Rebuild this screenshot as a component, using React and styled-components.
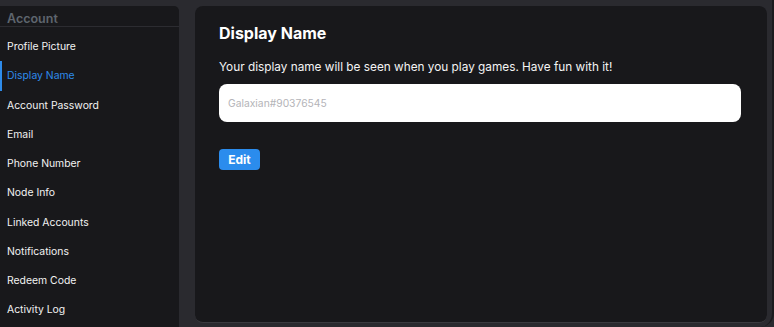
import styled, {createGlobalStyle} from "styled-components";

const GlobalStyle = createGlobalStyle`
    html, body {
        margin: 0;
        padding: 0;
        background: #2a2a2f;
        font-family: Inter, "Noto Sans", sans-serif;
        overflow: hidden;
    }
`;

const Page = styled.div`
    display: flex;
    gap: 16px;
    width: 774px;
    height: 327px;
    box-sizing: border-box;
    padding: 6px 5px 0 0;
    border-right: 2px solid #1a1a1d;
    border-bottom-right-radius: 14px;
`;

const Sidebar = styled.div`
    display: flex;
    flex-direction: column;
    width: 179px;
    flex-shrink: 0;
    background: #18181b;
    border-top-right-radius: 5px;
`;

const SectionTitle = styled.div`
    height: 21px;
    box-sizing: border-box;
    display: flex;
    align-items: flex-end;
    padding: 0 7px 0;
    font-size: 12.5px;
    font-weight: 600;
    color: #5e656e;
    border-bottom: 1px solid #2c2c31;
`;

const NavList = styled.nav`
    display: flex;
    flex-direction: column;
    padding-top: 5px;
`;

const NavItem = styled.div`
    height: 29.25px;
    display: flex;
    align-items: center;
    padding-left: ${(p) => (p.$active ? "5px" : "7px")};
    font-size: 10.4px;
    font-weight: 400;
    color: ${(p) => (p.$active ? "#2e8bea" : "#f2f2f2")};
    border-left: ${(p) => (p.$active ? "2px solid #2e8bea" : "none")};
`;

const Main = styled.div`
    flex: 1;
    display: flex;
    flex-direction: column;
    align-items: flex-start;
    background: #18181b;
    border-radius: 8px;
    padding: 16px 26px 0 24px;
    margin-bottom: 4px;
    border-bottom: 1px solid #3a3a3f;
`;

const Title = styled.h1`
    margin: 0;
    font-size: 16px;
    font-weight: 700;
    color: #ffffff;
    line-height: 22px;
`;

const Description = styled.p`
    margin: 15px 0 0;
    font-size: 11.8px;
    color: #f4f4f4;
    line-height: 16px;
`;

const Input = styled.input`
    margin-top: 9px;
    width: 100%;
    height: 38px;
    box-sizing: border-box;
    border: none;
    border-radius: 8px;
    background: #ffffff;
    padding: 0 9px;
    font-family: inherit;
    font-size: 10.3px;
    outline: none;
    &::placeholder {
        color: #b4b4b8;
    }
`;

const Button = styled.button`
    margin-top: 27px;
    width: 41px;
    height: 21px;
    border: none;
    border-radius: 4px;
    background: #2b8ced;
    color: #ffffff;
    font-family: inherit;
    font-size: 12px;
    font-weight: 700;
    padding: 0;
`;

const items = [
    "Profile Picture",
    "Display Name",
    "Account Password",
    "Email",
    "Phone Number",
    "Node Info",
    "Linked Accounts",
    "Notifications",
    "Redeem Code",
    "Activity Log",
];

export default function App() {
    return (
        <>
            <GlobalStyle />
            <Page>
                <Sidebar>
                    <SectionTitle>Account</SectionTitle>
                    <NavList>
                        {items.map((item) => (
                            <NavItem key={item} $active={item === "Display Name"}>
                                {item}
                            </NavItem>
                        ))}
                    </NavList>
                </Sidebar>
                <Main>
                    <Title>Display Name</Title>
                    <Description>
                        Your display name will be seen when you play games. Have fun with it!
                    </Description>
                    <Input placeholder="Galaxian#90376545" />
                    <Button>Edit</Button>
                </Main>
            </Page>
        </>
    );
}
